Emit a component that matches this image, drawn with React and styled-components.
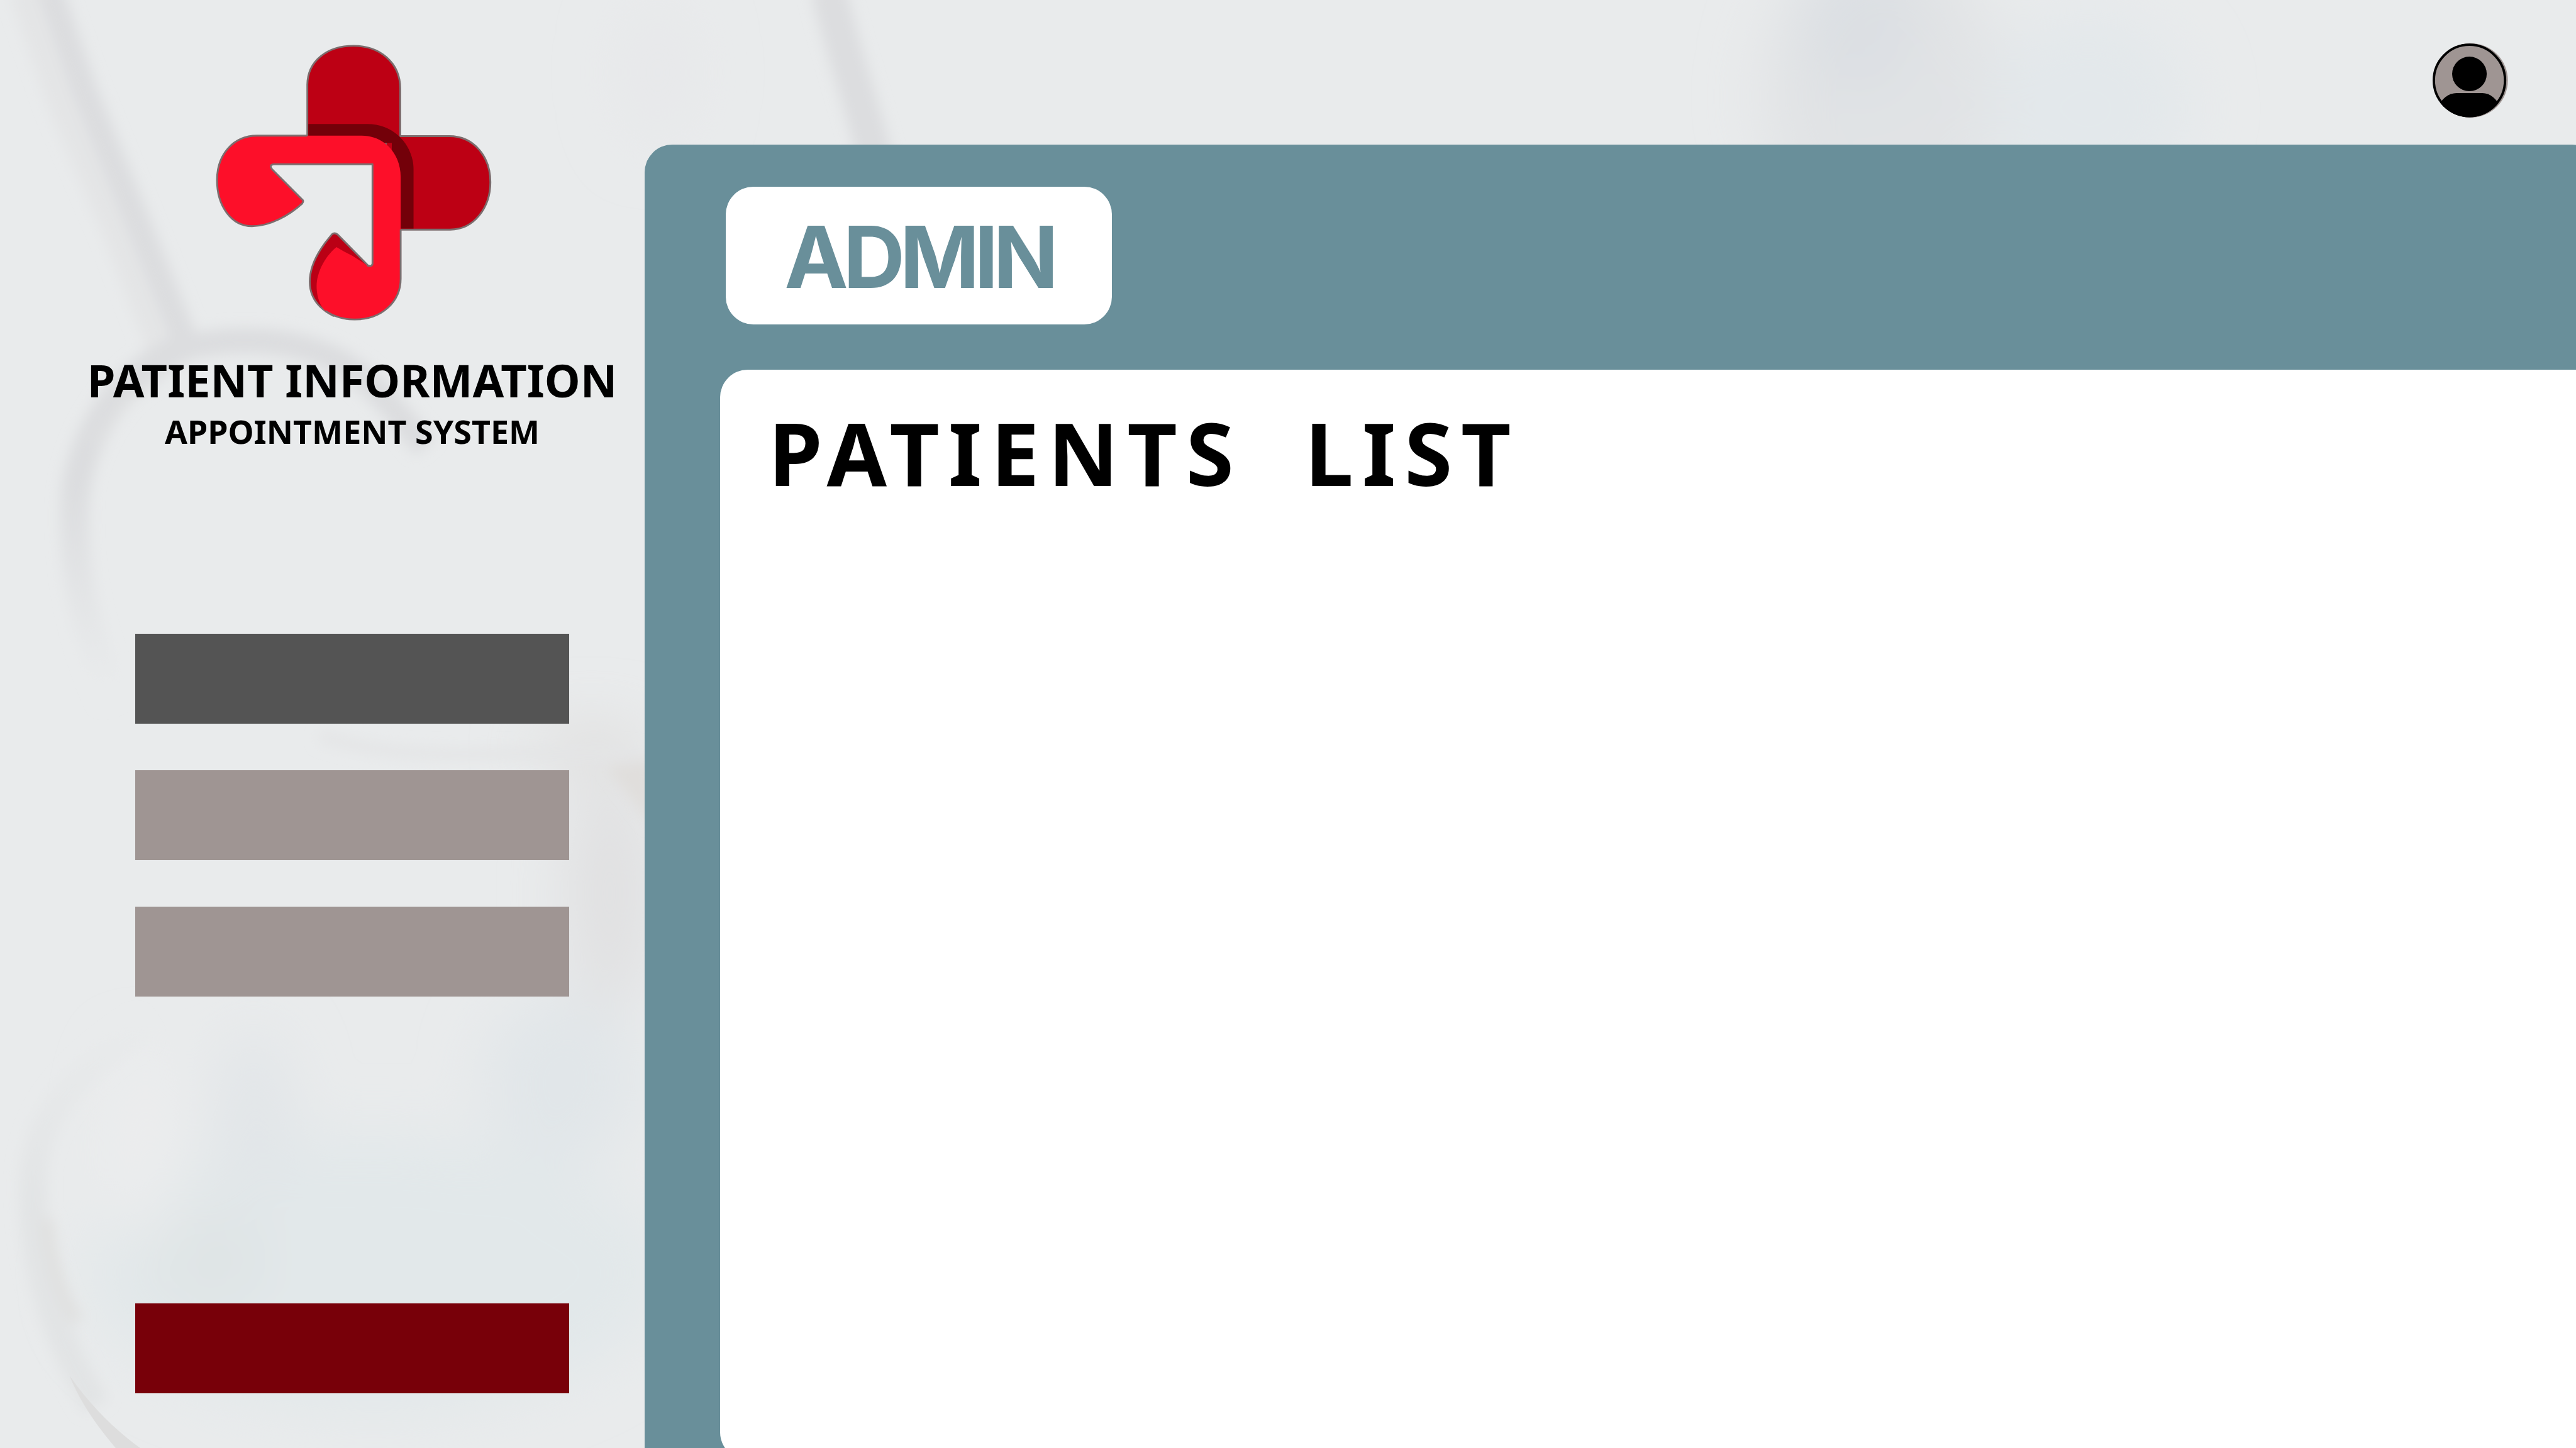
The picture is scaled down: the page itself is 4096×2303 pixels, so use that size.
import React from "react";
import styled, { createGlobalStyle } from "styled-components";

const colors = {
  page: "#e9ebec",
  teal: "#698f9a",
  slate: "#545454",
  taupe: "#9f9593",
  maroon: "#780009",
  ink: "#000000",
  paper: "#ffffff",
};

const GlobalStyle = createGlobalStyle`
  * { box-sizing: border-box; }
  body {
    margin: 0;
    background: ${colors.page};
    color: ${colors.ink};
    font-family: "Noto Sans", "Open Sans", sans-serif;
  }
`;

const Page = styled.div`
  position: relative;
  display: grid;
  grid-template-columns: 1025px 1fr;
  min-height: 100vh;
  overflow: hidden;
`;

const Backdrop = styled.svg`
  position: absolute;
  inset: 0;
  width: 100%;
  height: 100%;
`;

const Sidebar = styled.aside`
  position: relative;
  display: flex;
  flex-direction: column;
  align-items: center;
  padding: 69px 24px 87px 119px;
`;

const LogoMark = styled.svg`
  width: 448px;
  height: 443px;
`;

const BrandTitle = styled.h1`
  margin: 48px 0 6px;
  font-size: 72px;
  line-height: 88px;
  font-weight: 700;
  white-space: nowrap;
`;

const BrandSubtitle = styled.p`
  margin: 0;
  font-size: 52px;
  line-height: 64px;
  font-weight: 700;
  white-space: nowrap;
`;

const Nav = styled.nav`
  flex: 1;
  display: flex;
  flex-direction: column;
  gap: 74px;
  margin-top: 290px;
`;

const NavButton = styled.button`
  width: 690px;
  height: 143px;
  padding: 0;
  border: 0;
  background: ${(p) => p.$tone};
  cursor: pointer;

  &:last-child {
    margin-top: auto;
  }
`;

const Main = styled.main`
  position: relative;
  display: flex;
  flex-direction: column;
  min-width: 0;
`;

const TopBar = styled.header`
  display: flex;
  justify-content: flex-end;
  height: 230px;
  padding: 68px 108px 0 0;
`;

const AvatarButton = styled.button`
  width: 120px;
  height: 120px;
  padding: 0;
  border: 0;
  border-radius: 50%;
  background: none;
  cursor: pointer;

  svg {
    display: block;
    width: 100%;
    height: 100%;
  }
`;

const Workspace = styled.section`
  flex: 1;
  display: flex;
  flex-direction: column;
  align-items: flex-start;
  gap: 72px;
  margin-right: -38px;
  padding: 67px 0 0 120px;
  border-radius: 44px 44px 0 0;
  background: ${colors.teal};
`;

const RoleBadge = styled.div`
  display: flex;
  align-items: center;
  justify-content: center;
  width: 614px;
  height: 219px;
  margin-left: 9px;
  padding-top: 4px;
  border-radius: 44px;
  background: ${colors.paper};
  color: ${colors.teal};
  font-family: Inter, "Liberation Sans", sans-serif;
  font-size: 136px;
  font-weight: 700;
  letter-spacing: -0.06em;
`;

const Sheet = styled.div`
  flex: 1;
  align-self: stretch;
  margin-bottom: -19px;
  padding: 47px 77px;
  border-radius: 44px 0 0 44px;
  background: ${colors.paper};
`;

const SheetTitle = styled.h2`
  margin: 0;
  font-size: 138px;
  line-height: 168px;
  font-weight: 700;
  letter-spacing: 0.1em;
  white-space: pre;
`;

const navItems = [
  { label: "Patients", tone: colors.slate },
  { label: "Appointments", tone: colors.taupe },
  { label: "Records", tone: colors.taupe },
  { label: "Log out", tone: colors.maroon },
];

function StethoscopeBackdrop() {
  return (
    <Backdrop viewBox="0 0 4269 2400" preserveAspectRatio="xMinYMin slice" aria-hidden="true">
      <defs>
        <filter id="soft" x="-20%" y="-20%" width="140%" height="140%">
          <feGaussianBlur stdDeviation="11" />
        </filter>
        <filter id="haze" x="-50%" y="-50%" width="200%" height="200%">
          <feGaussianBlur stdDeviation="50" />
        </filter>
        <linearGradient id="tubeFade" gradientUnits="userSpaceOnUse" x1="0" y1="800" x2="0" y2="1140">
          <stop offset="0" stopColor="#dcdddf" />
          <stop offset="1" stopColor="#e9ebec" />
        </linearGradient>
        <linearGradient id="ringFade" gradientUnits="userSpaceOnUse" x1="0" y1="1690" x2="0" y2="2000">
          <stop offset="0" stopColor="#e9ebec" />
          <stop offset="1" stopColor="#e2e4e5" />
        </linearGradient>
      </defs>
      <g filter="url(#haze)">
        <ellipse cx="620" cy="2110" rx="480" ry="230" fill="#e2e8ea" />
        <ellipse cx="420" cy="1850" rx="60" ry="140" fill="#e1e5e8" />
        <ellipse cx="930" cy="1790" rx="130" ry="140" fill="#e1e6e9" />
        <ellipse cx="350" cy="2090" rx="100" ry="80" fill="#dfe4e5" />
        <ellipse cx="1010" cy="1480" rx="70" ry="200" fill="#e0e0e1" />
        <ellipse cx="980" cy="1240" rx="100" ry="36" fill="#dfdedd" />
        <ellipse cx="240" cy="1900" rx="50" ry="160" fill="#ecedee" />
        <ellipse cx="3120" cy="160" rx="200" ry="260" fill="#e1e3e5" />
        <ellipse cx="3080" cy="40" rx="90" ry="120" fill="#dbdfe3" />
        <ellipse cx="3460" cy="180" rx="170" ry="160" fill="#e3e8eb" />
        <ellipse cx="1090" cy="120" rx="60" ry="120" fill="#e7e8ea" />
      </g>
      <g filter="url(#soft)" fill="none" stroke="#dcdddf">
        <path d="M45 -20L110 170L200 380L285 600" stroke="#e4e5e6" strokeWidth="62" />
        <path d="M82 -20L140 150L225 360L305 560" strokeWidth="42" />
        <path d="M275 590C330 560 470 550 560 598C620 630 660 690 705 740" strokeWidth="42" />
        <path d="M300 580C210 610 130 720 124 830C120 930 135 1040 190 1160" stroke="url(#tubeFade)" strokeWidth="48" />
        <path d="M270 620C220 650 180 690 155 740" stroke="#dfe0e1" strokeWidth="12" />
        <path d="M240 1700C120 1780 60 1850 55 1950C52 2080 80 2200 160 2330" stroke="url(#ringFade)" strokeWidth="46" />
        <path d="M78 2020C85 2090 100 2150 130 2190" stroke="#dfdfde" strokeWidth="18" />
        <path d="M1372 -20C1395 80 1425 160 1452 270" strokeWidth="58" />
        <path d="M530 1220C680 1270 850 1240 1060 1250" stroke="#e4e5e6" strokeWidth="20" />
        <path d="M1005 1270L1080 1370L1080 1260Z" fill="#e0dedc" stroke="none" />
      </g>
      <path d="M115 2280C140 2340 175 2380 200 2410L235 2402C190 2370 150 2330 115 2280Z" fill="#dddddd" />
    </Backdrop>
  );
}

function Logo() {
  return (
    <LogoMark viewBox="33 65 1400 1385" role="img" aria-label="Medical cross">
      <g stroke="#7c6d6e" strokeWidth="9" strokeLinejoin="round">
        <path
          d="M510 560V270C512 150 610 77 740 77C870 77 972 160 972 290V526H1215C1340 526 1420 630 1420 755C1420 880 1340 991 1220 991H900V560Z"
          fill="#bd0014"
        />
        <path
          d="M522 1250C522 1160 580 1075 632 1015Q645 1003 660 1015L810 1168L900 1300L640 1420C570 1385 522 1330 522 1250Z"
          fill="#ba0015"
        />
      </g>
      <path d="M515 466H810C945 466 1038 575 1038 690V986H930V560H515Z" fill="#730009" />
      <path
        d="M260 524H780C895 524 974 615 974 730V1235C974 1350 880 1438 745 1438C680 1438 620 1420 590 1385C555 1340 550 1270 562 1225C578 1160 620 1105 655 1078Q690 1100 735 1122L806 1168Q832 1178 834 1160V666H345Q318 668 334 690L488 845Q492 852 484 862C420 920 325 974 235 974C130 974 61 870 61 745C61 620 140 524 260 524Z"
        fill="#fd0f29"
      />
      <path
        d="M510 524H260C140 524 61 620 61 745C61 870 130 974 235 974C325 974 420 920 484 862Q492 852 488 845L334 690Q318 668 345 666H834V1160Q832 1178 806 1168M974 991V1235C974 1350 880 1438 745 1438C690 1438 640 1422 600 1395"
        fill="none"
        stroke="#7c6d6e"
        strokeWidth="9"
        strokeLinejoin="round"
      />
    </LogoMark>
  );
}

function AvatarIcon() {
  return (
    <svg viewBox="0 0 375 375" aria-hidden="true">
      <defs>
        <clipPath id="avatar-disc">
          <circle cx="183" cy="187" r="183" />
        </clipPath>
      </defs>
      <circle cx="189" cy="187" r="185" fill={colors.taupe} />
      <circle cx="183" cy="187" r="177" fill={colors.taupe} stroke="#000" strokeWidth="12" />
      <circle cx="183" cy="155" r="86" />
      <path
        d="M20 330C45 275 80 250 120 250H246C286 250 315 275 346 330V375H20Z"
        clipPath="url(#avatar-disc)"
      />
    </svg>
  );
}

export default function App() {
  return (
    <>
      <GlobalStyle />
      <Page>
        <StethoscopeBackdrop />
        <Sidebar>
          <Logo />
          <BrandTitle>PATIENT INFORMATION</BrandTitle>
          <BrandSubtitle>APPOINTMENT SYSTEM</BrandSubtitle>
          <Nav aria-label="Main">
            {navItems.map((item) => (
              <NavButton key={item.label} type="button" aria-label={item.label} $tone={item.tone} />
            ))}
          </Nav>
        </Sidebar>
        <Main>
          <TopBar>
            <AvatarButton type="button" aria-label="Account">
              <AvatarIcon />
            </AvatarButton>
          </TopBar>
          <Workspace>
            <RoleBadge>ADMIN</RoleBadge>
            <Sheet>
              <SheetTitle>{"PATIENTS  LIST"}</SheetTitle>
            </Sheet>
          </Workspace>
        </Main>
      </Page>
    </>
  );
}
